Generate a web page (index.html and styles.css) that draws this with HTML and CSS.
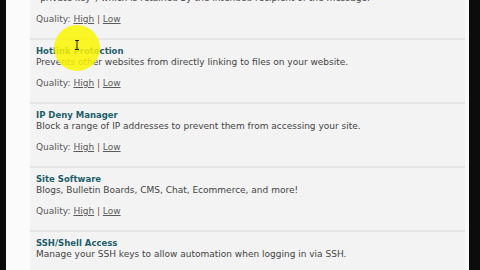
FILE: index.html
```html
<!DOCTYPE html>
<html>
<head>
<meta charset="utf-8">
<link rel="stylesheet" href="styles.css">
</head>
<body>
<div class="frame">
  <div class="edge-left"></div>
  <div class="gutter-left"></div>
  <div class="panel">
    <div class="list">
      <div class="item first">
        <div class="desc">"private key") which is retained by the intended recipient of the message.</div>
        <div class="quality">Quality: <a>High</a> | <a>Low</a></div>
      </div>
      <div class="item">
        <div class="title">Hotlink Protection</div>
        <div class="desc">Prevents other websites from directly linking to files on your website.</div>
        <div class="quality">Quality: <a>High</a> | <a>Low</a></div>
      </div>
      <div class="item">
        <div class="title">IP Deny Manager</div>
        <div class="desc">Block a range of IP addresses to prevent them from accessing your site.</div>
        <div class="quality">Quality: <a>High</a> | <a>Low</a></div>
      </div>
      <div class="item">
        <div class="title">Site Software</div>
        <div class="desc">Blogs, Bulletin Boards, CMS, Chat, Ecommerce, and more!</div>
        <div class="quality">Quality: <a>High</a> | <a>Low</a></div>
      </div>
      <div class="item">
        <div class="title">SSH/Shell Access</div>
        <div class="desc">Manage your SSH keys to allow automation when logging in via SSH.</div>
      </div>
    </div>
  </div>
  <div class="gutter-right"></div>
  <div class="edge-right"></div>
  <div class="cursor-spot">
    <svg class="ibeam" width="6" height="10" viewBox="0 0 6 10"><path d="M1 0.5h4M3 0.5v9M1 9.5h4" stroke="#222" stroke-width="1" fill="none"/></svg>
  </div>
</div>
</body>
</html>
```
FILE: styles.css
```css
html, body {
  margin: 0;
  padding: 0;
  width: 480px;
  height: 270px;
  overflow: hidden;
  background: #000;
}
.frame {
  position: relative;
  display: flex;
  width: 480px;
  height: 270px;
  overflow: hidden;
}
.edge-left {
  width: 6px;
  background: #0a0a0a;
}
.gutter-left {
  width: 24px;
  background: #fbfbfb;
}
.panel {
  width: 435px;
  background: #f3f3f3;
  overflow: hidden;
}
.gutter-right {
  width: 4px;
  background: #f8f8f8;
}
.edge-right {
  flex: 1;
  background: #0c0c0c;
}
.list {
  margin-top: -26px;
  font-family: "DejaVu Sans", Verdana, sans-serif;
  font-size: 9px;
  color: #444;
}
.item {
  height: 64px;
  box-sizing: border-box;
  border-top: 2px solid #e6e6e6;
  padding: 6px 0 0 6px;
}
.item.first {
  border-top: none;
  padding-top: 19px;
}
.title {
  line-height: 11px;
  font-size: 8.5px;
  font-weight: bold;
  color: #1d5e6b;
}
.desc {
  line-height: 11px;
  white-space: nowrap;
}
.quality {
  margin-top: 10px;
  line-height: 11px;
  color: #5a5a5a;
}
.quality a {
  color: #5a5a5a;
  text-decoration: underline;
}
.cursor-spot {
  position: absolute;
  left: 54px;
  top: 25px;
  width: 46px;
  height: 46px;
  border-radius: 50%;
  background: rgba(250, 245, 0, 0.85);
  display: flex;
  align-items: center;
  justify-content: center;
}
.ibeam {
  margin-top: -6px;
}
```
